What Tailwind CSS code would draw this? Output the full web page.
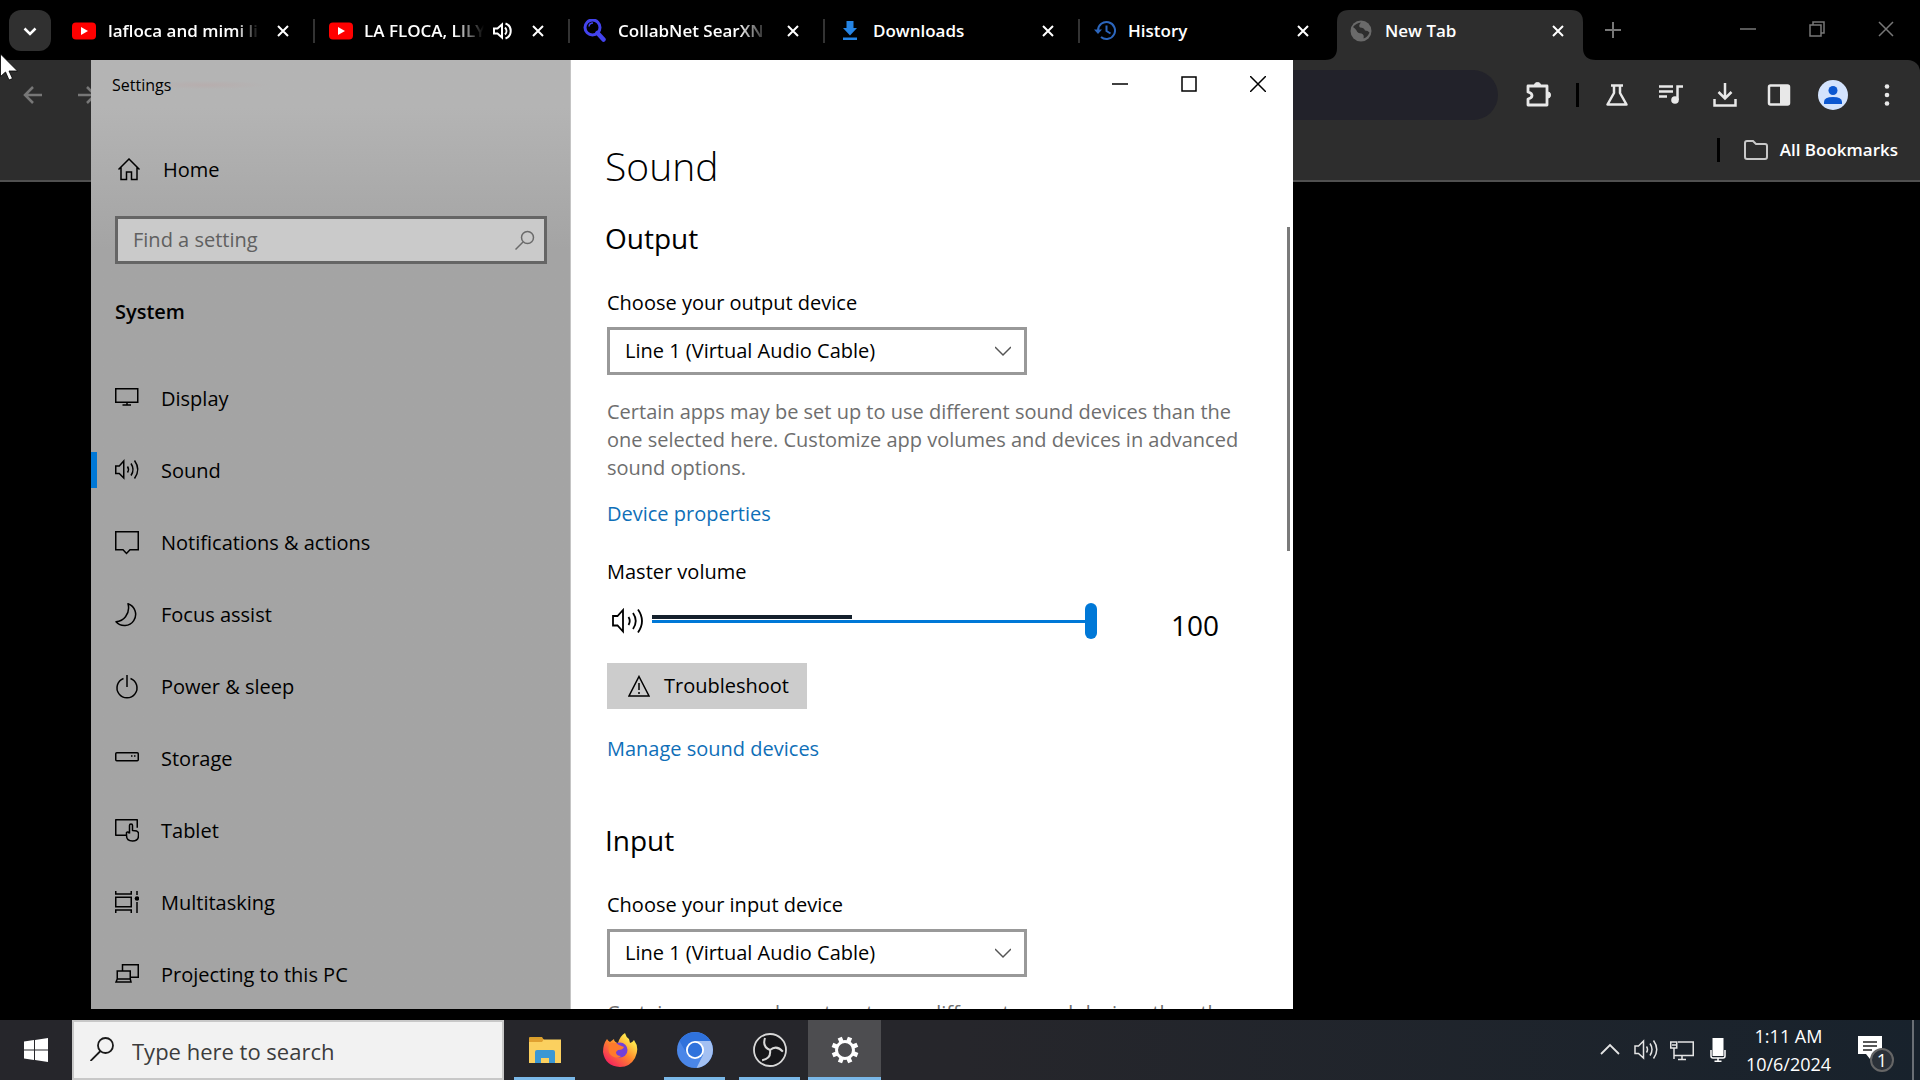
<!DOCTYPE html>
<html lang="en">
  <head>
    <meta charset="UTF-8" />
    <meta name="viewport" content="width=device-width, initial-scale=1.0" />
    <title>Sound settings</title>
    <script src="https://cdn.jsdelivr.net/npm/@tailwindcss/browser@4"></script>
  </head>
  <body class="relative flex h-screen flex-col overflow-hidden bg-black font-['Open_Sans','Noto_Sans',sans-serif]">
    <!-- Browser -->
    <div class="flex flex-1 flex-col">
      <div class="flex h-15 text-[17px] font-semibold text-white">
        <div class="w-[58px] pt-[10px] pl-[9px]">
          <button aria-label="Search tabs" class="flex h-[41px] w-[42px] items-center justify-center rounded-xl bg-[#303030]">
            <svg class="h-4 w-4" viewBox="0 0 16 16" fill="none" stroke="#fff" stroke-width="2.5"><path d="M2.500 5.500l5.500 5.500l5.500-5.500" /></svg>
          </button>
        </div>
        <div class="flex w-[255px] items-center gap-3 pt-px pr-[18px] pl-[14px]">
          <svg class="h-6 w-6 shrink-0" viewBox="0 0 24 24"><rect y="3.500" width="24" height="17" rx="4" fill="#f00" /><path d="M9 8l7 4l-7 4z" fill="#fff" /></svg>
          <span class="min-w-0 flex-1 overflow-hidden whitespace-nowrap mask-r-from-85%">lafloca and mimi li</span>
          <button aria-label="Close tab" class="flex h-6 w-6 items-center justify-center"><svg class="h-3 w-3" viewBox="0 0 12 12" stroke="#fff" stroke-width="2"><path d="M1 1l10 10M11 1l-10 10" /></svg></button>
        </div>
        <div class="flex w-[255px] items-center gap-[14px] pt-px pr-[18px]">
          <div class="h-6 w-[2px] bg-[#333]"></div>
          <svg class="h-6 w-6 shrink-0" viewBox="0 0 24 24"><rect y="3.500" width="24" height="17" rx="4" fill="#f00" /><path d="M9 8l7 4l-7 4z" fill="#fff" /></svg>
          <div class="ml-[-3px] flex min-w-0 flex-1 items-center gap-2">
            <span class="min-w-0 flex-1 overflow-hidden whitespace-nowrap mask-r-from-75%">LA FLOCA, LILY</span>
            <svg class="h-5 w-5 shrink-0" viewBox="0 0 20 20" fill="none" stroke="#fff" stroke-width="2"><path d="M2 7.500h3.500l4.500-4v13l-4.500-4h-3.500zM13 6.500a5 5 0 0 1 0 7M13.500 2.500a8 8 0 0 1 0 15" /></svg>
          </div>
          <button aria-label="Close tab" class="flex h-6 w-6 items-center justify-center"><svg class="h-3 w-3" viewBox="0 0 12 12" stroke="#fff" stroke-width="2"><path d="M1 1l10 10M11 1l-10 10" /></svg></button>
        </div>
        <div class="flex w-[255px] items-center gap-3 pt-px pr-[18px]">
          <div class="h-6 w-[2px] bg-[#333]"></div>
          <svg class="h-6 w-6 shrink-0" viewBox="0 0 24 24" fill="none" stroke="#4343ee"><circle cx="10.500" cy="8.500" r="7.500" stroke-width="3" /><path d="M7 7.500a4 4 0 0 1 4-3.500" stroke-width="1.500" /><path d="M15.500 14l6 6.500" stroke-width="4.500" stroke-linecap="round" /></svg>
          <span class="min-w-0 flex-1 overflow-hidden whitespace-nowrap mask-r-from-80%">CollabNet SearXN</span>
          <button aria-label="Close tab" class="flex h-6 w-6 items-center justify-center"><svg class="h-3 w-3" viewBox="0 0 12 12" stroke="#fff" stroke-width="2"><path d="M1 1l10 10M11 1l-10 10" /></svg></button>
        </div>
        <div class="flex w-[255px] items-center gap-3 pt-px pr-[18px]">
          <div class="h-6 w-[2px] bg-[#333]"></div>
          <svg class="h-6 w-6 shrink-0" viewBox="0 0 24 24" fill="#2584e4"><path d="M9.500 2h7v7h3.500l-7 7.500l-7-7.500h3.500zM6 18.500h14v2.500h-14z" /></svg>
          <span class="min-w-0 flex-1 truncate">Downloads</span>
          <button aria-label="Close tab" class="flex h-6 w-6 items-center justify-center"><svg class="h-3 w-3" viewBox="0 0 12 12" stroke="#fff" stroke-width="2"><path d="M1 1l10 10M11 1l-10 10" /></svg></button>
        </div>
        <div class="flex w-[255px] items-center gap-3 pt-px pr-[18px]">
          <div class="h-6 w-[2px] bg-[#333]"></div>
          <svg class="h-6 w-6 shrink-0" viewBox="0 0 24 24" fill="none" stroke="#2c66bd" stroke-width="2"><path d="M6 11.500a8.500 8.500 0 1 1 3 6.500M14.500 6.500v5.500l4 2.500" /><path d="M2 10.500h8l-4 4.500z" fill="#2c66bd" stroke="none" /></svg>
          <span class="min-w-0 flex-1 truncate">History</span>
          <button aria-label="Close tab" class="flex h-6 w-6 items-center justify-center"><svg class="h-3 w-3" viewBox="0 0 12 12" stroke="#fff" stroke-width="2"><path d="M1 1l10 10M11 1l-10 10" /></svg></button>
        </div>
        <div class="relative flex w-[255px] items-center gap-3 pt-px pr-[18px] pl-4">
          <svg class="absolute bottom-0 left-[-8px] h-[50px] w-[271px]" viewBox="0 0 271 50" fill="#2d2d2d"><path d="M0 50q12 0 12-12v-26q0-12 12-12h222q12 0 12 12v26q0 12 13 12z" /></svg>
          <svg class="relative h-6 w-6 shrink-0" viewBox="0 0 24 24"><circle cx="12" cy="12" r="10.500" fill="#6a6a6a" /><path d="M4 8q3-4 8-4.500q-3 3-1 5q4 0 5 3q3 0 4.500 2q-2 5-6 6q1-4-2-5q-4 0-5-3q-1-2-3.500-3.500z" fill="#2d2d2d" /></svg>
          <span class="relative min-w-0 flex-1 truncate">New Tab</span>
          <button aria-label="Close tab" class="relative flex h-6 w-6 items-center justify-center"><svg class="h-3 w-3" viewBox="0 0 12 12" stroke="#fff" stroke-width="2"><path d="M1 1l10 10M11 1l-10 10" /></svg></button>
        </div>
        <button aria-label="New tab" class="ml-3 flex w-[26px] items-center justify-center"><svg class="h-4 w-4" viewBox="0 0 16 16" stroke="#777" stroke-width="2"><path d="M8 0v16M0 8h16" /></svg></button>
        <div class="ml-auto flex h-[58px]">
          <button aria-label="Minimize" class="flex w-[69px] items-center justify-center"><svg class="h-4 w-4" viewBox="0 0 16 16" stroke="#777" stroke-width="1.500"><path d="M0 8h16" /></svg></button>
          <button aria-label="Restore" class="flex w-[69px] items-center justify-center"><svg class="h-4 w-4" viewBox="0 0 16 16" fill="none" stroke="#777" stroke-width="1.500"><path d="M1 4h11v11h-11zM4 4v-3h11v11h-3" /></svg></button>
          <button aria-label="Close" class="flex w-[69px] items-center justify-center"><svg class="h-4 w-4" viewBox="0 0 16 16" stroke="#777" stroke-width="1.500"><path d="M1 1l14 14M15 1l-14 14" /></svg></button>
        </div>
      </div>

      <div class="h-[122px] rounded-tr-xl border-b-2 border-[#505050] bg-[#2d2d2d]">
        <div class="flex h-[70px] items-center pr-[17px] pl-5">
          <button aria-label="Back" class="flex w-[26px] justify-center"><svg class="h-5 w-5" viewBox="0 0 20 20" fill="none" stroke="#777" stroke-width="2.500"><path d="M19 10h-17M10 2l-8 8l8 8" /></svg></button>
          <button aria-label="Forward" class="ml-7 flex w-[26px] justify-center"><svg class="h-5 w-5" viewBox="0 0 20 20" fill="none" stroke="#777" stroke-width="2.500"><path d="M1 10h17M10 2l8 8l-8 8" /></svg></button>
          <input type="text" aria-label="Address" class="ml-7 h-[50px] flex-1 rounded-full bg-[#22222a]" />
          <button aria-label="Extensions" class="ml-6 flex w-8 justify-center"><svg class="h-7 w-7" viewBox="0 0 28 28" fill="none" stroke="#e8e8e8" stroke-width="2.800" stroke-linejoin="round"><path d="M4 5h19v19h-19v-6q4-1 4-3.500t-4-3.500z" /><path d="M10.500 4q0-2.500 3-2.500t3 2.500zM24 11q2.500 0 2.500 3t-2.500 3z" fill="#e8e8e8" stroke-width="1" /></svg></button>
          <div class="mx-[22px] h-6 w-[3px] bg-black"></div>
          <div class="flex gap-[22px]">
            <button aria-label="Labs" class="flex h-8 w-8 items-center justify-center"><svg class="h-6 w-6" viewBox="0 0 24 24" fill="none" stroke="#e8e8e8" stroke-width="2.500" stroke-linejoin="round"><path d="M6 2.500h12M9 3v7l-6.500 11.500h19l-6.500-11.500v-7" /></svg></button>
            <button aria-label="Media controls" class="flex h-8 w-8 items-center justify-center"><svg class="h-6 w-6" viewBox="0 0 24 24" fill="none" stroke="#e8e8e8" stroke-width="2.500"><path d="M0 3.500h14M0 8.500h14M0 13.500h8M18.500 17v-13.500h5.500" /><circle cx="16" cy="17" r="3.800" fill="#e8e8e8" stroke="none" /></svg></button>
            <button aria-label="Downloads" class="flex h-8 w-8 items-center justify-center"><svg class="h-6 w-6" viewBox="0 0 24 24" fill="none" stroke="#e8e8e8" stroke-width="2.500"><path d="M12 0v15M5.500 9l6.500 6.500l6.500-6.500M1.500 16v6.500h21v-6.500" /></svg></button>
            <button aria-label="Side panel" class="flex h-8 w-8 items-center justify-center"><svg class="h-6 w-6" viewBox="0 0 24 24" fill="none" stroke="#e8e8e8" stroke-width="2.500"><rect x="2" y="2.500" width="20" height="19" rx="1.500" /><path d="M13 3h9v18h-9z" fill="#e8e8e8" stroke="none" /></svg></button>
            <button aria-label="Profile" class="flex h-8 w-8 items-center justify-center"><svg class="h-[30px] w-[30px]" viewBox="0 0 30 30"><circle cx="15" cy="15" r="15" fill="#d3e3fd" /><circle cx="15" cy="10.500" r="4.500" fill="#0b57d0" /><path d="M6 24v-2q0-5 9-5t9 5v2z" fill="#0b57d0" /></svg></button>
            <button aria-label="Menu" class="flex h-8 w-8 items-center justify-center"><svg class="h-6 w-6" viewBox="0 0 24 24" fill="#e8e8e8"><circle cx="12" cy="3.500" r="2.300" /><circle cx="12" cy="12" r="2.300" /><circle cx="12" cy="20.500" r="2.300" /></svg></button>
          </div>
        </div>
        <div class="flex h-10 items-center justify-end pr-[22px]">
          <div class="mr-6 h-6 w-[3px] bg-black"></div>
          <button class="flex items-center gap-3 text-[17px] font-semibold text-white">
            <svg class="h-6 w-6" viewBox="0 0 24 24" fill="none" stroke="#c8c8c8" stroke-width="2"><path d="M1 5q0-2 2-2h6l3 3h9q2 0 2 2v11q0 2-2 2h-18q-2 0-2-2z" /></svg>
            All Bookmarks
          </button>
        </div>
      </div>
    </div>

    <!-- Settings window -->
    <div class="absolute top-15 bottom-[71px] left-[91px] flex w-[1202px] overflow-hidden bg-white text-[20px] text-black">
      <nav class="w-[480px] shrink-0 border-r border-[#c4c4c4] bg-linear-to-b from-[#b4b4b4] from-5% to-[#a4a4a4] to-20%">
        <div class="h-[50px] bg-radial-[at_24%_50%] from-[#b9a9a9]/60 to-transparent to-12% pt-[13px] pl-[21px] text-[16px] leading-6">Settings</div>
        <a href="#" class="mt-[35px] flex h-[50px] items-center gap-[22px] pl-[26px]">
          <svg class="h-6 w-6" viewBox="0 0 24 24" fill="none" stroke="#000" stroke-width="1.500"><path d="M1.500 11.500l10.500-10.500l10.500 10.500M4 9.500v12h5.500v-7.500h5v7.500h5.500v-12" /></svg>
          Home
        </a>
        <div class="relative mt-[21px] mr-[23px] ml-6">
          <input type="text" aria-label="Find a setting" placeholder="Find a setting" class="h-12 w-full border-3 border-[#656565] bg-[#cacaca] px-[15px] pb-[2px] placeholder:text-[#606060]" />
          <svg class="pointer-events-none absolute top-[14px] right-[12px] h-5 w-5" viewBox="0 0 20 20" fill="none" stroke="#6a6a6a" stroke-width="1.500"><circle cx="12.500" cy="7.500" r="6" /><path d="M8 12l-7.500 7.500" /></svg>
        </div>
        <h2 class="mt-8 pl-6 leading-8 font-semibold">System</h2>
        <div class="mt-[35px]">
          <a href="#" class="flex h-18 items-center gap-[22px] pl-6">
            <svg class="h-6 w-6" viewBox="0 0 24 24" fill="none" stroke="#000" stroke-width="1.500"><path d="M0.750 1.750h22v13.500h-22zM12 15.500v2.500M7.500 18h8.500" /></svg>
            Display
          </a>
          <a href="#" aria-current="page" class="relative flex h-18 items-center gap-[22px] pl-6">
            <span class="absolute top-[17px] left-0 h-9 w-[6px] bg-[#0078d7]"></span>
            <svg class="h-6 w-6 overflow-visible" viewBox="0 0 24 24" fill="none" stroke="#000" stroke-width="1.500"><path d="M0.750 7h3.500l4.500-5v17l-4.500-4.500h-3.500zM12.500 7.500q2 3 0 6M16 4.500q4 6 0 12M19.500 1.500q6.500 9 0 18" /></svg>
            Sound
          </a>
          <a href="#" class="flex h-18 items-center gap-[22px] pl-6">
            <svg class="h-6 w-6" viewBox="0 0 24 24" fill="none" stroke="#000" stroke-width="1.500"><path d="M0.750 0.750h22.500v18h-8.250l-3.500 3.750l-3.500-3.750h-7.250z" /></svg>
            Notifications &amp; actions
          </a>
          <a href="#" class="flex h-18 items-center gap-[22px] pl-6">
            <svg class="h-6 w-6" viewBox="0 0 24 24" fill="none" stroke="#000" stroke-width="1.500" stroke-linejoin="round"><path d="M13 0.750a11.200 11.200 0 1 1-12 18q6-0.500 9.500-5q4.500-6 2.500-13z" /></svg>
            Focus assist
          </a>
          <a href="#" class="flex h-18 items-center gap-[22px] pl-6">
            <svg class="h-6 w-6" viewBox="0 0 24 24" fill="none" stroke="#000" stroke-width="1.500"><path d="M12 0v12M8.500 3.500a10 10 0 1 0 7 0" /></svg>
            Power &amp; sleep
          </a>
          <a href="#" class="flex h-18 items-center gap-[22px] pl-6">
            <svg class="h-6 w-6" viewBox="0 0 24 24" fill="none" stroke="#000" stroke-width="1.500"><rect x="0.750" y="5.750" width="22.500" height="8" rx="1" /><path d="M16 9h1.500M19 9h1.500" /></svg>
            Storage
          </a>
          <a href="#" class="flex h-18 items-center gap-[22px] pl-6">
            <svg class="h-6 w-6" viewBox="0 0 24 24" fill="none" stroke="#000" stroke-width="1.500" stroke-linejoin="round"><path d="M11.500 16.250h-10.750v-15.500h21.500v8" /><path d="M14.500 14.500v-8q0-1.500 1.500-1.500t1.500 1.500v5q6 0 6 3v2q0 5.500-6 5.500t-6-5.500v-3q1.500-1.500 3 1" /></svg>
            Tablet
          </a>
          <a href="#" class="flex h-18 items-center gap-[22px] pl-6">
            <svg class="h-6 w-6" viewBox="0 0 24 24" fill="none" stroke="#000" stroke-width="1.500"><path d="M0.750 0v3h15.500v-3M0.750 6.250h15.500v9.500h-15.500zM0.750 22v-3h15.500v3M22 0v4M22 11v11" /><circle cx="22" cy="7.500" r="2.300" fill="#000" stroke="none" /></svg>
            Multitasking
          </a>
          <a href="#" class="flex h-18 items-center gap-[22px] pl-6">
            <svg class="h-6 w-6" viewBox="0 0 24 24" fill="none" stroke="#000" stroke-width="1.500"><path d="M7.500 8v-6.250h15.750v12.500h-7.500M2.250 8h13v8h-13zM2.250 16l-1.250 3h15l-0.750-3" /></svg>
            Projecting to this PC
          </a>
        </div>
      </nav>

      <main class="relative flex-1 pl-9">
        <div class="flex h-12 justify-end pr-px">
          <button aria-label="Minimize" class="flex w-[69px] items-center justify-center"><svg class="h-4 w-4" viewBox="0 0 16 16" stroke="#000" stroke-width="1.500"><path d="M0 8h16" /></svg></button>
          <button aria-label="Maximize" class="flex w-[69px] items-center justify-center"><svg class="h-4 w-4" viewBox="0 0 16 16" fill="none" stroke="#000" stroke-width="1.500"><path d="M1 1h14v14h-14z" /></svg></button>
          <button aria-label="Close" class="flex w-[69px] items-center justify-center"><svg class="h-4 w-4" viewBox="0 0 16 16" stroke="#000" stroke-width="1.500"><path d="M0 0l16 16M16 0l-16 16" /></svg></button>
        </div>
        <h1 class="mt-[34px] ml-[-2px] text-[39px] leading-12 font-light">Sound</h1>
        <h2 class="mt-7 ml-[-2px] text-[28px] leading-10">Output</h2>
        <label for="output" class="mt-[29px] block leading-8">Choose your output device</label>
        <div class="relative mt-2 w-[420px]">
          <select id="output" class="h-12 w-full appearance-none border-3 border-[#999] bg-white px-[15px]">
            <option>Line 1 (Virtual Audio Cable)</option>
          </select>
          <svg class="pointer-events-none absolute top-4 right-4 h-4 w-4" viewBox="0 0 16 16" fill="none" stroke="#555" stroke-width="1.500"><path d="M0 4l8 8l8-8" /></svg>
        </div>
        <p class="mt-[23px] mr-[52px] leading-7 text-[#6e6e6e]">Certain apps may be set up to use different sound devices than the one selected here. Customize app volumes and devices in advanced sound options.</p>
        <a href="#" class="mt-4 block leading-8 text-[#0f6fb8]">Device properties</a>
        <label for="volume" class="mt-[26px] block leading-8">Master volume</label>
        <div class="mt-[15px] flex h-9 items-center">
          <svg class="ml-[5px] h-7 w-8" viewBox="0 0 32 28" fill="none" stroke="#000" stroke-width="1.800"><path d="M1 9h4.500l5.500-6v21.500l-5.500-6h-4.500zM16.500 10q2.500 4 0 8M21 6q5.500 8 0 16M26 2.500q8 11.500 0 23" /></svg>
          <div class="relative ml-2 h-9 w-[445px]">
            <input id="volume" type="range" min="0" max="100" value="100" class="block h-9 w-full appearance-none bg-linear-to-r from-[#0078d7] to-[#0078d7] bg-[length:100%_3px] bg-center bg-no-repeat [&::-webkit-slider-thumb]:h-9 [&::-webkit-slider-thumb]:w-3 [&::-webkit-slider-thumb]:appearance-none [&::-webkit-slider-thumb]:rounded-full [&::-webkit-slider-thumb]:bg-[#0078d7]" />
            <div class="pointer-events-none absolute top-3 left-0 h-1 w-[200px] bg-[#14202c]"></div>
          </div>
          <output for="volume" class="ml-[74px] pt-2 text-[28px] leading-8">100</output>
        </div>
        <button class="mt-6 flex h-[46px] w-[200px] items-center gap-[14px] bg-[#ccc] pl-[21px]">
          <svg class="h-[22px] w-[22px]" viewBox="0 0 22 22" fill="none" stroke="#000" stroke-width="1.500"><path d="M11 1.500l10 19.500h-20zM11 8v7M11 17v2" /></svg>
          Troubleshoot
        </button>
        <a href="#" class="mt-6 block leading-8 text-[#0f6fb8]">Manage sound devices</a>
        <h2 class="mt-[55px] ml-[-2px] text-[28px] leading-10">Input</h2>
        <label for="input" class="mt-[29px] block leading-8">Choose your input device</label>
        <div class="relative mt-2 w-[420px]">
          <select id="input" class="h-12 w-full appearance-none border-3 border-[#999] bg-white px-[15px]">
            <option>Line 1 (Virtual Audio Cable)</option>
          </select>
          <svg class="pointer-events-none absolute top-4 right-4 h-4 w-4" viewBox="0 0 16 16" fill="none" stroke="#555" stroke-width="1.500"><path d="M0 4l8 8l8-8" /></svg>
        </div>
        <p class="mt-[22px] mr-[52px] leading-7 text-[#6e6e6e]">Certain apps may be set up to use different sound devices than the one selected here. Customize app volumes and devices in advanced sound options.</p>
        <div class="absolute top-[167px] right-[3px] h-[324px] w-[3px] bg-[#7a7a7a]"></div>
      </main>
    </div>

    <!-- Taskbar -->
    <div class="flex h-15 bg-linear-to-r from-[#26262b] from-50% to-[#18222c] text-white">
      <button aria-label="Start" class="flex w-18 items-center justify-center"><svg class="h-6 w-6" viewBox="0 0 24 24" fill="#fff"><path d="M0 3.500l10-1.400v9.400h-10zM11 2l13-2v11.500h-13zM0 12.500h10v9.400l-10-1.400zM11 12.500h13v11.500l-13-2z" /></svg></button>
      <div class="relative w-[432px]">
        <input type="text" aria-label="Search" placeholder="Type here to search" class="h-full w-full border-2 border-[#c8c8c8] bg-[#f2f2f2] pt-[2px] pl-[58px] text-[22px] placeholder:text-[#3c3c3c]" />
        <svg class="pointer-events-none absolute top-[17px] left-[18px] h-6 w-6" viewBox="0 0 24 24" fill="none" stroke="#1a1a1a" stroke-width="1.800"><circle cx="15.500" cy="8.500" r="7.500" /><path d="M10.500 14l-10 10" /></svg>
      </div>
      <div class="ml-1 flex gap-[2px]">
        <button aria-label="File Explorer" class="relative flex w-[73px] items-center justify-center">
          <svg class="h-9 w-9" viewBox="0 0 36 36"><path d="M2 6q0-1 1-1h12l2 3h-15z" fill="#d9a02c" /><path d="M2 7.500h32v23.500h-32z" fill="#fbd05f" /><path d="M2 7h15l-2 3h-13z" fill="#e0a030" /><path d="M8 20q0-2 2-2h16q2 0 2 2v11h-6v-5h-8v5h-6z" fill="#3a97d4" /></svg>
          <span class="absolute inset-x-[6px] bottom-0 h-[3px] bg-[#7ab8e8]"></span>
        </button>
        <button aria-label="Firefox" class="flex w-[73px] items-center justify-center">
          <svg class="h-9 w-9" viewBox="0 0 36 36">
            <defs><linearGradient id="fox" x1="0.900" y1="0.100" x2="0.200" y2="0.950"><stop offset="0.150" stop-color="#ffe14a" /><stop offset="0.500" stop-color="#ff8a2b" /><stop offset="1" stop-color="#f5215e" /></linearGradient></defs>
            <path d="M1 20q0-8 4-13q1 2 3 3l4-3q0 3 4 4q2-7 7-10q1 4 4 6l1 4q2 0 4-3q6 8 1 18q-5 9-15 9q-15-1-17-15z" fill="url(#fox)" />
            <circle cx="18" cy="18" r="7.500" fill="#7340d8" /><path d="M7 12q5-3 10 1l5 2q-1 3-6 3l-2 2q0 4 5 4q-4 3-9 0t-3-12z" fill="#ff7a2c" />
          </svg>
        </button>
        <button aria-label="Chromium" class="relative flex w-[73px] items-center justify-center">
          <svg class="h-9 w-9" viewBox="0 0 36 36"><circle cx="18" cy="18" r="18" fill="#4a86e8" /><path d="M18 9h15.500a18 18 0 0 1-14 27l6.500-13z" fill="#a3c0f2" /><path d="M2.500 9a18 18 0 0 1 31 0h-15.500l-8 13z" fill="#2f72dc" /><circle cx="18" cy="18" r="9" fill="#fff" /><circle cx="18" cy="18" r="7.200" fill="#2f72dc" /></svg>
          <span class="absolute inset-x-[6px] bottom-0 h-[3px] bg-[#7ab8e8]"></span>
        </button>
        <button aria-label="OBS Studio" class="relative flex w-[73px] items-center justify-center">
          <svg class="h-9 w-9" viewBox="0 0 36 36" fill="none" stroke="#d8d8d8"><circle cx="18" cy="18" r="16" fill="#17171a" stroke-width="1.800" /><path d="M13 6q-3 9 5 12" stroke-width="2" /><path d="M13 6q-3 9 5 12" stroke-width="2" transform="rotate(120 18 18)" /><path d="M13 6q-3 9 5 12" stroke-width="2" transform="rotate(240 18 18)" /></svg>
          <span class="absolute inset-x-[6px] bottom-0 h-[3px] bg-[#7ab8e8]"></span>
        </button>
        <button aria-label="Settings" class="relative flex w-[73px] items-center justify-center bg-[#4d4d50]">
          <svg class="h-7 w-7" viewBox="0 0 28 28" fill="none" stroke="#fff"><circle cx="14" cy="14" r="8.500" stroke-width="3" /><path d="M14 0.500v5M14 22.500v5M0.500 14h5M22.500 14h5M4.500 4.500l3.500 3.500M20 20l3.500 3.500M23.500 4.500l-3.500 3.500M8 20l-3.500 3.500" stroke-width="4.500" transform="rotate(22 14 14)" /></svg>
          <span class="absolute inset-x-0 bottom-0 h-[3px] bg-[#7ab8e8]"></span>
        </button>
      </div>
      <div class="ml-auto flex items-center">
        <button aria-label="Show hidden icons" class="flex w-9 justify-center"><svg class="h-5 w-5" viewBox="0 0 20 20" fill="none" stroke="#e4e4e4" stroke-width="1.800"><path d="M1 14l9-9l9 9" /></svg></button>
        <button aria-label="Volume" class="flex w-9 justify-center"><svg class="h-6 w-6" viewBox="0 0 24 24" fill="none" stroke="#e4e4e4" stroke-width="1.500"><path d="M1 8h3.500l5-5v17l-5-4.500h-3.500zM12.500 8.500q2 3 0 6M16 5.500q4 6 0 12M19.500 2.500q6.500 9 0 18" /></svg></button>
        <button aria-label="Network" class="flex w-9 justify-center"><svg class="h-6 w-6" viewBox="0 0 24 24" fill="none" stroke="#e4e4e4" stroke-width="1.500"><path d="M8 4h15.250v13.500h-19.250M0.750 4h6v6h-6zM4 10v11M2 7h4M12 17.500v4M8 21.500h8" /></svg></button>
        <button aria-label="Microphone" class="flex w-9 justify-center"><svg class="h-6 w-6" viewBox="0 0 24 24" fill="none" stroke="#fff" stroke-width="1.500"><path d="M6.500 0h11v18h-11z" fill="#fff" stroke="none" /><path d="M5 12v6q0 2 2 2h10q2 0 2-2v-6M12 20v3M8.500 23.250h7" /></svg></button>
        <div class="w-[105px] text-center text-[18px] leading-7">1:11 AM<br />10/6/2024</div>
        <button aria-label="Notifications" class="relative ml-[17px] h-8 w-9">
          <svg class="h-8 w-9" viewBox="0 0 36 32"><path d="M0 2h24v18h-8l-4 5l-4-5h-8z" fill="#fff" /><path d="M5 8h14M5 12h14M5 16h9" stroke="#222" stroke-width="1.500" /></svg>
          <span class="absolute top-[14px] left-3 flex h-6 w-6 items-center justify-center rounded-full border-2 border-[#666] bg-[#2b3138] text-[18px] leading-4">1</span>
        </button>
        <div class="ml-[18px] h-full w-2 border-l-2 border-[#6a6f75]"></div>
      </div>
    </div>

    <!-- Mouse pointer -->
    <svg class="pointer-events-none absolute top-[53px] left-0 h-7 w-5" viewBox="0 0 20 28"><path d="M0.500 1v22.500l5-4.500l3.500 8l3.500-1.500l-3.500-7.500h8.500z" fill="#fff" stroke="#000" stroke-width="0.800" /></svg>
  </body>
</html>
